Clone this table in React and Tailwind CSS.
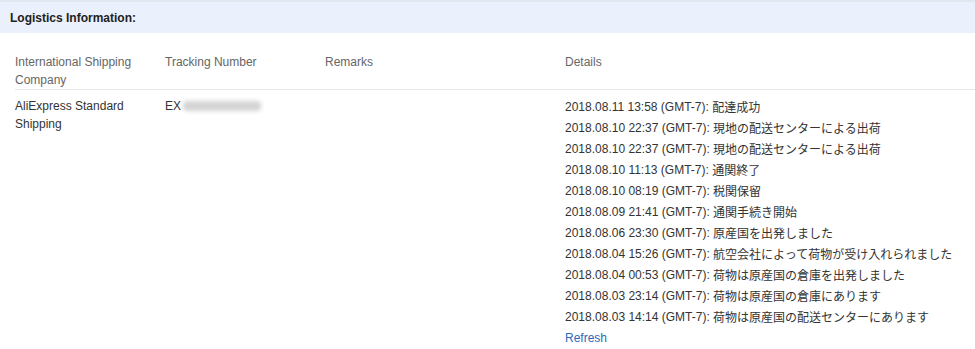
const details = [
  ['2018.08.11 13:58', '配達成功'],
  ['2018.08.10 22:37', '現地の配送センターによる出荷'],
  ['2018.08.10 22:37', '現地の配送センターによる出荷'],
  ['2018.08.10 11:13', '通関終了'],
  ['2018.08.10 08:19', '税関保留'],
  ['2018.08.09 21:41', '通関手続き開始'],
  ['2018.08.06 23:30', '原産国を出発しました'],
  ['2018.08.04 15:26', '航空会社によって荷物が受け入れられました'],
  ['2018.08.04 00:53', '荷物は原産国の倉庫を出発しました'],
  ['2018.08.03 23:14', '荷物は原産国の倉庫にあります'],
  ['2018.08.03 14:14', '荷物は原産国の配送センターにあります'],
];

const font = { fontFamily: '"Liberation Sans", Arial, "Noto Sans CJK JP", sans-serif' };

export default function App() {
  return (
    <div className="w-[975px] h-[349px] bg-white text-[12px] overflow-hidden" style={font}>
      {/* ── Section title band ── */}
      <div className="h-[33px] border-t-2 border-[#e2e7ef] bg-[#eaf1fc] pl-[10px] flex items-center">
        <span className="font-bold text-[#222] text-[12px]">Logistics Information:</span>
      </div>

      {/* ── Table ── */}
      <div className="pl-[15px]">
        <div className="grid grid-cols-[150px_160px_240px_1fr] border-b border-[#e6e6e6] pt-[20px] pb-0 leading-[18px] text-[#666]">
          <div className="pr-[20px]">International Shipping Company</div>
          <div>Tracking Number</div>
          <div>Remarks</div>
          <div>Details</div>
        </div>

        <div className="grid grid-cols-[150px_160px_240px_1fr] pt-[6px] text-[#333]">
          <div className="pr-[20px] leading-[18px] pt-[1px]">AliExpress Standard Shipping</div>
          <div className="flex items-start leading-[18px] pt-[1px]">
            <span>EX</span>
            <span className="mt-[4px] ml-[2px] h-[10px] w-[78px] rounded-sm bg-[#d4d4d4] blur-[2px]" />
          </div>
          <div />
          <div>
            {details.map(([time, msg], i) => (
              <div key={i} className="h-[21px] flex items-center whitespace-nowrap">
                <span>{time} (GMT-7):&nbsp;</span>
                <span style={{ fontFamily: '"Noto Sans CJK JP", sans-serif' }} className="leading-none">{msg}</span>
              </div>
            ))}
            <div className="h-[21px] flex items-center">
              <a className="text-[#2a6ab8] cursor-pointer">Refresh</a>
            </div>
          </div>
        </div>
      </div>
    </div>
  );
}
